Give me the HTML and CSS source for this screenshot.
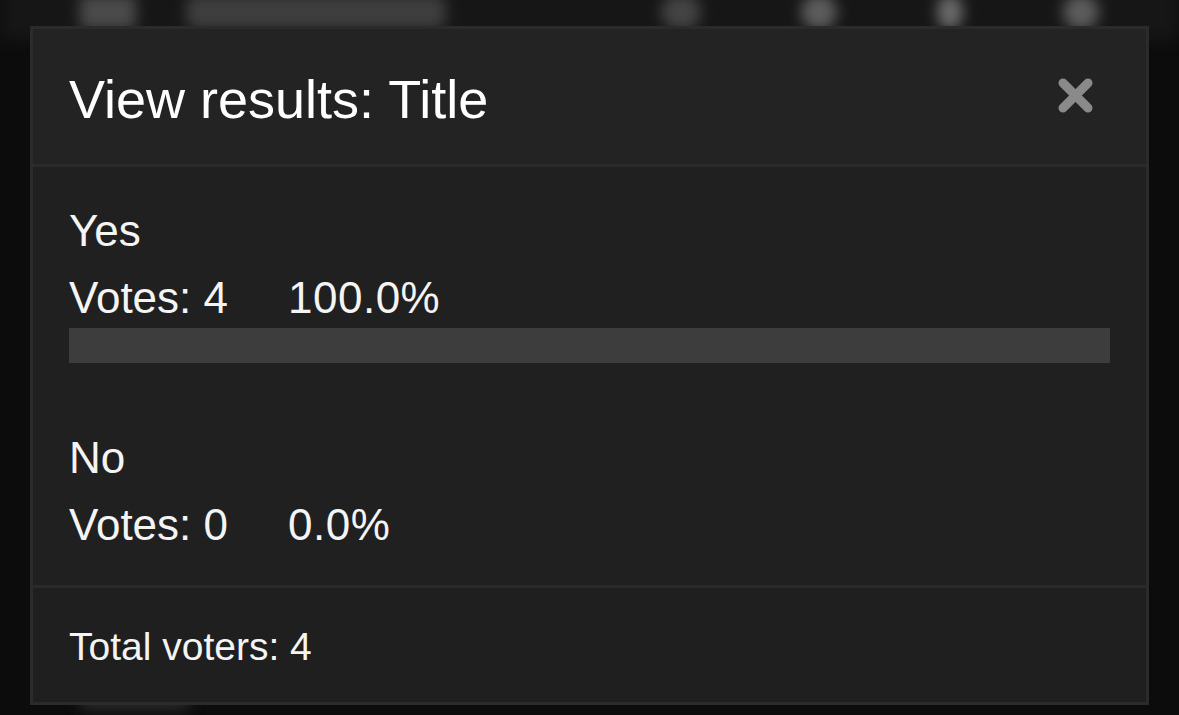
FILE: index.html
```html
<!DOCTYPE html>
<html lang="en">
<head>
    <meta charset="UTF-8">
    <meta name="viewport" content="width=device-width, initial-scale=1.0">
    <title>View results</title>
    <link rel="stylesheet" href="styles.css">
</head>
<body>
    <!-- pagina de fondo, difuminada detras del modal -->
    <div class="page">
        <div class="topbar">
            <span class="nav-icon"></span>
            <span class="nav-title"></span>
            <span class="nav-spacer"></span>
            <span class="nav-dot wide"></span>
            <span class="nav-dot"></span>
            <span class="nav-dot small"></span>
            <span class="nav-dot"></span>
        </div>
        <div class="page-content">
            <span class="page-chip"></span>
        </div>
    </div>

    <div class="modal">
        <div class="modal-header">
            <h1 class="modal-title">View results: Title</h1>
            <button class="close-btn" aria-label="Close">
                <svg width="37" height="37" viewBox="0 0 37 37">
                    <path d="M6 6 L31 31 M31 6 L6 31" stroke="#8a8a8a" stroke-width="9" stroke-linecap="round" fill="none"/>
                </svg>
            </button>
        </div>
        <div class="modal-body">
            <div class="option">
                <div class="option-label">Yes</div>
                <div class="option-stats">
                    <span class="votes">Votes: 4</span>
                    <span class="percent">100.0%</span>
                </div>
                <div class="bar" style="width: 100%"></div>
            </div>
            <div class="option">
                <div class="option-label">No</div>
                <div class="option-stats">
                    <span class="votes">Votes: 0</span>
                    <span class="percent">0.0%</span>
                </div>
            </div>
        </div>
        <div class="modal-footer">Total voters: 4</div>
    </div>
</body>
</html>
```

FILE: styles.css
```css
/* Fondo general */
body {
    margin: 0;
    height: 715px;
    overflow: hidden;
    background: #0c0c0c;
    font-family: "Liberation Sans", Arial, sans-serif;
    color: #f4f4f4;
}

/* Pagina difuminada detras */
.page {
    filter: blur(7px);
    height: 100%;
}

.topbar {
    display: flex;
    align-items: center;
    gap: 50px;
    height: 56px;
    padding: 0 80px;
    background: #161616;
    margin-top: -16px;
}

.nav-icon {
    width: 56px;
    height: 34px;
    background: #4a4a4a;
    border-radius: 4px;
}

.nav-title {
    width: 260px;
    height: 34px;
    background: #3e3e3e;
    border-radius: 10px;
}

.nav-spacer {
    flex: 1;
}

.nav-dot {
    width: 36px;
    height: 36px;
    border-radius: 50%;
    background: #5c5c5c;
    margin-left: 50px;
}

.nav-dot.wide {
    width: 40px;
    background: #444;
}

.nav-dot.small {
    width: 26px;
    background: #6a6a6a;
}

.page-content {
    padding: 640px 0 0 80px;
}

.page-chip {
    display: inline-block;
    width: 110px;
    height: 30px;
    background: #2a2a2a;
    border-radius: 6px;
}

/* Modal */
.modal {
    position: fixed;
    top: 26px;
    left: 30px;
    width: 1119px;
    box-sizing: border-box;
    border: 3px solid #2b2b2b;
    background: #202020;
}

.modal-header {
    display: flex;
    justify-content: space-between;
    align-items: flex-start;
    padding: 44px 52px 38px 36px;
    background: #232323;
    border-bottom: 3px solid #2a2a2a;
}

.modal-title {
    margin: 0;
    font-size: 54px;
    line-height: 53px;
    font-weight: normal;
    color: #ffffff;
}

.close-btn {
    margin-top: 4px;
    padding: 0;
    border: none;
    background: none;
    line-height: 0;
    cursor: pointer;
}

.modal-body {
    padding: 39px 36px 35px;
}

.option + .option {
    margin-top: 70px;
}

.option-label,
.option-stats {
    font-size: 44px;
    line-height: 50px;
}

.option-label {
    margin-bottom: 17px;
}

.option-stats {
    display: flex;
    gap: 60px;
}

.percent {
    letter-spacing: 0.5px;
}

.bar {
    height: 35px;
    margin-top: 5px;
    background: #3d3d3d;
}

.modal-footer {
    padding: 37px 36px 33px;
    font-size: 39px;
    line-height: 44px;
    border-top: 3px solid #2a2a2a;
    background: #1f1f1f;
}
```
